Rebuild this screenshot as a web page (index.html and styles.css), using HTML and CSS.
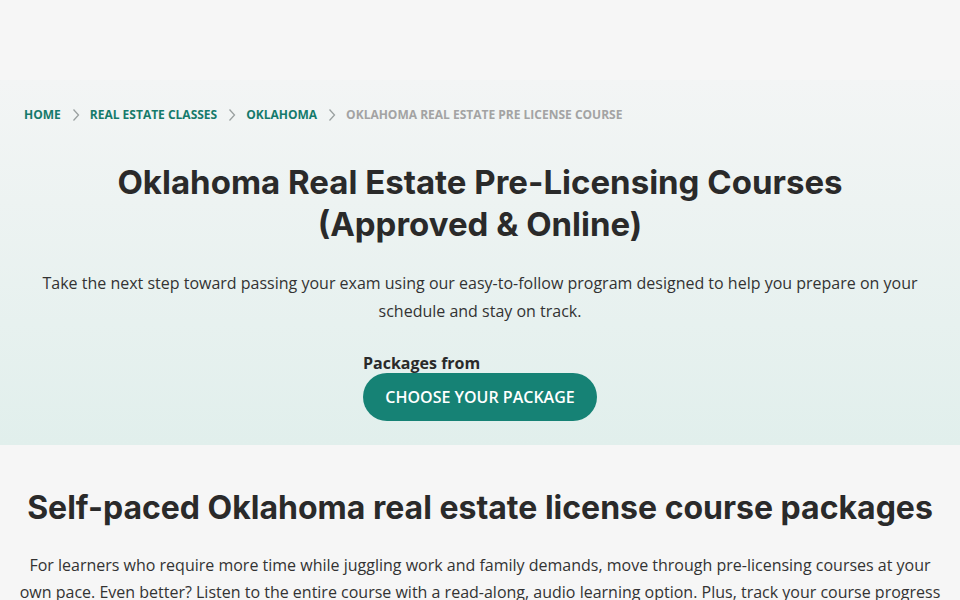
FILE: index.html
```html
<!DOCTYPE html>
<html lang="en">
<head>
<meta charset="utf-8">
<link rel="stylesheet" href="styles.css">
</head>
<body>
<div class="header-space"></div>
<section class="hero">
  <nav class="crumbs">
    <a href="#">HOME</a>
    <span class="sep"><svg width="8" height="14" viewBox="0 0 8 14"><path d="M1.5 1.5 L6.5 7 L1.5 12.5" fill="none" stroke="#9aa0a0" stroke-width="1.3"/></svg></span>
    <a href="#">REAL ESTATE CLASSES</a>
    <span class="sep"><svg width="8" height="14" viewBox="0 0 8 14"><path d="M1.5 1.5 L6.5 7 L1.5 12.5" fill="none" stroke="#9aa0a0" stroke-width="1.3"/></svg></span>
    <a href="#">OKLAHOMA</a>
    <span class="sep"><svg width="8" height="14" viewBox="0 0 8 14"><path d="M1.5 1.5 L6.5 7 L1.5 12.5" fill="none" stroke="#9aa0a0" stroke-width="1.3"/></svg></span>
    <span class="current">OKLAHOMA REAL ESTATE PRE LICENSE COURSE</span>
  </nav>
  <h1 class="hero-title">Oklahoma Real Estate Pre-Licensing Courses<br>(Approved &amp; Online)</h1>
  <p class="hero-text">Take the next step toward passing your exam using our easy-to-follow program designed to help you prepare on your schedule and stay on track.</p>
  <div class="cta">
    <div class="from">Packages from</div>
    <a class="btn" href="#">CHOOSE YOUR PACKAGE</a>
  </div>
</section>
<section class="packages">
  <h2 class="pk-title">Self-paced Oklahoma real estate license course packages</h2>
  <p class="pk-text">For learners who require more time while juggling work and family demands, move through pre-licensing courses at your own pace. Even better? Listen to the entire course with a read-along, audio learning option. Plus, track your course progress</p>
</section>
</body>
</html>
```

FILE: styles.css
```css
html, body {
  margin: 0;
  padding: 0;
  background: #f6f6f6;
  font-family: "Open Sans", "Liberation Sans", sans-serif;
  color: #2b2b2b;
}
.header-space {
  height: 80px;
}
.hero {
  background: linear-gradient(180deg, #f3f5f5 0%, #e1efec 100%);
  padding: 27px 24px 24px;
  height: 314px;
  display: flex;
  flex-direction: column;
  align-items: center;
}
.crumbs {
  align-self: flex-start;
  display: flex;
  align-items: center;
  font-size: 12px;
  font-weight: 700;
  line-height: 16px;
}
.crumbs a {
  color: #157a6b;
  text-decoration: none;
}
.crumbs .sep {
  display: inline-flex;
  margin: 0 10px 0 11px;
}
.crumbs .current {
  color: #a3a3a3;
}
.hero-title {
  font-family: Inter, "Liberation Sans", sans-serif;
  font-weight: 700;
  font-size: 33px;
  line-height: 42px;
  text-align: center;
  margin: 38px 0 0;
  color: #2a2a2a;
}
.hero-text {
  font-size: 16px;
  line-height: 28px;
  text-align: center;
  max-width: 900px;
  margin: 24px 0 0;
  color: #333;
}
.cta {
  margin-top: 27px;
  display: flex;
  flex-direction: column;
  align-items: flex-start;
}
.from {
  font-weight: 700;
  font-size: 16px;
  line-height: 22px;
  color: #2a2a2a;
  margin-bottom: -1px;
}
.btn {
  display: inline-flex;
  align-items: center;
  justify-content: center;
  height: 48px;
  width: 234px;
  border-radius: 24px;
  background: #168275;
  color: #fff;
  text-decoration: none;
  font-size: 16px;
  font-weight: 600;
}
.packages {
  padding: 42px 10px 0;
  text-align: center;
}
.pk-title {
  font-family: Inter, "Liberation Sans", sans-serif;
  font-weight: 700;
  font-size: 32px;
  line-height: 42px;
  margin: 0;
  color: #2a2a2a;
}
.pk-text {
  font-size: 16px;
  line-height: 27px;
  max-width: 930px;
  margin: 23px auto 0;
  color: #333;
}
```
